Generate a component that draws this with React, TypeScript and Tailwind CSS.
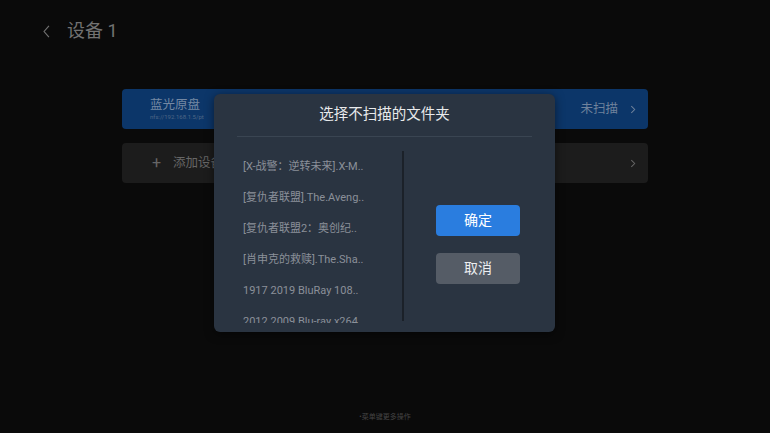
import React from 'react'

const folders = [
  '[X-战警：逆转未来].X-M..',
  '[复仇者联盟].The.Aveng..',
  '[复仇者联盟2：奥创纪..',
  '[肖申克的救赎].The.Sha..',
  '1917 2019 BluRay 108..',
  '2012 2009 Blu-ray x264..',
]

function Chevron({ className }: { className?: string }) {
  return (
    <svg viewBox="0 0 10 16" className={className} fill="none" stroke="currentColor" strokeWidth="1.8">
      <path d="M2 2l6 6-6 6" />
    </svg>
  )
}

export default function App() {
  return (
    <div
      className="relative h-[433px] w-[770px] overflow-hidden bg-[#0a0a0a]"
      style={{ fontFamily: "Roboto, 'Noto Sans CJK SC', sans-serif" }}
    >
      {/* header */}
      <div className="flex h-[62px] items-center pl-[42px] text-[#727272]">
        <svg viewBox="0 0 10 16" className="h-[13px] w-[9px]" fill="none" stroke="currentColor" strokeWidth="1.4">
          <path d="M8 1L2 8l6 7" />
        </svg>
        <span className="ml-[16px] text-[18px] leading-none">设备 1</span>
      </div>

      {/* devices */}
      <div className="mt-[27px] flex flex-col gap-[14px] px-[122px]">
        <div className="flex h-[40px] items-center rounded-[4px] bg-[#0c3669] pl-[28px] pr-[12px]">
          <div className="flex flex-col">
            <span className="text-[12.5px] leading-[16px] text-[#7488a3]">蓝光原盘</span>
            <span className="text-[6px] leading-[8px] text-[#4d6686]">nfs://192.168.1.5/pt</span>
          </div>
          <span className="ml-auto text-[12.5px] text-[#6f829c]">未扫描</span>
          <Chevron className="ml-[12px] h-[9px] w-[6px] text-[#6f829c]" />
        </div>
        <div className="flex h-[40px] items-center rounded-[4px] bg-[#1c1c1c] pl-[30px] pr-[12px] text-[#666]">
          <span className="text-[16px] leading-none">+</span>
          <span className="ml-[12px] text-[12.5px]">添加设备</span>
          <Chevron className="ml-auto h-[9px] w-[6px]" />
        </div>
      </div>

      <div className="absolute bottom-[11px] left-0 right-0 text-center text-[7px] text-[#444]">•菜单键更多操作</div>

      {/* modal */}
      <div className="absolute left-[214px] top-[94px] flex h-[238px] w-[341px] flex-col rounded-[6px] bg-[#2a3441] shadow-[0_2px_10px_rgba(0,0,0,0.5)]">
        <div className="mx-[23px] flex h-[43px] items-center justify-center border-b border-[#3a4552] text-[14.5px] text-[#e8eaec]">
          选择不扫描的文件夹
        </div>
        <div className="mt-[14px] flex">
          <div className="h-[172px] w-[188px] overflow-hidden pl-[29px]">
            {folders.map((f) => (
              <div key={f} className="h-[31px] whitespace-nowrap text-[11px] leading-[31px] text-[#8a9099]">
                {f}
              </div>
            ))}
          </div>
          <div className="h-[170px] w-[2px] bg-[#1b2129]" />
          <div className="flex flex-1 flex-col items-center pt-[54px] pr-[3px]">
            <button className="h-[31px] w-[84px] rounded-[4px] bg-[#2a7ddf] text-[14px] text-white">确定</button>
            <button className="mt-[17px] h-[31px] w-[84px] rounded-[4px] bg-[#555c66] text-[14px] text-[#eceef0]">取消</button>
          </div>
        </div>
      </div>
    </div>
  )
}
